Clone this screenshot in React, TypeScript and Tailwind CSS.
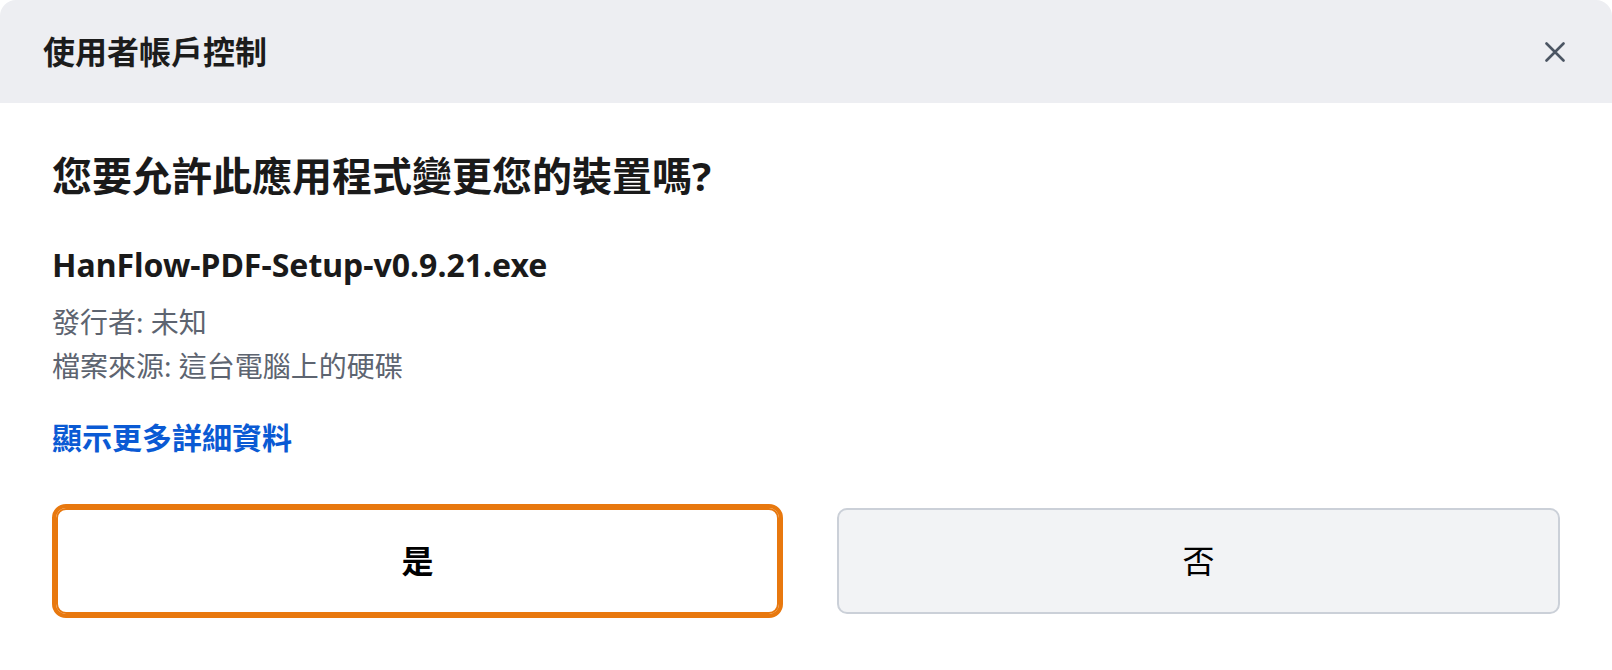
import React from "react";

const font = { fontFamily: '"Noto Sans", "Noto Sans CJK TC", sans-serif' };

export default function App() {
  return (
    <div className="w-[1612px] h-[670px] bg-white" style={font}>
      <div className="w-full h-full rounded-[16px] overflow-hidden bg-white flex flex-col">
        <div className="h-[103px] shrink-0 bg-[#edeef2] flex items-center justify-between pl-[43px] pr-[47px]">
          <div className="text-[32px] leading-[40px] font-bold text-[#1c1c1c]">使用者帳戶控制</div>
          <button className="w-[20px] h-[20px] flex items-center justify-center">
            <svg width="20" height="20" viewBox="0 0 20 20" fill="none">
              <path d="M1.5 1.5 L18.5 18.5 M18.5 1.5 L1.5 18.5" stroke="#4b5563" strokeWidth="2.6" strokeLinecap="round" />
            </svg>
          </button>
        </div>
        <div className="flex flex-col px-[52px] pt-[49px]">
          <div className="text-[40px] leading-[48px] font-bold text-[#1a1a1a]">您要允許此應用程式變更您的裝置嗎?</div>
          <div className="mt-[45px] text-[32px] leading-[40px] font-bold text-[#1a1a1a]">HanFlow-PDF-Setup-v0.9.21.exe</div>
          <div className="mt-[15px] text-[28px] leading-[44px] text-[#5d6470]">
            <div>發行者: 未知</div>
            <div>檔案來源: 這台電腦上的硬碟</div>
          </div>
          <div className="mt-[30px] text-[30px] leading-[40px] font-bold text-[#0a5ad4]">顯示更多詳細資料</div>
          <div className="mt-[50px] pl-[4px] grid grid-cols-2 gap-[58px]">
            <button className="h-[106px] rounded-[10px] border-2 border-[#e8780e] outline-[4px] outline-solid outline-[#e8780e] bg-white text-[32px] font-bold text-black">
              是
            </button>
            <button className="h-[106px] rounded-[10px] border-2 border-[#cbd0d8] bg-[#f2f3f5] text-[32px] text-black">
              否
            </button>
          </div>
        </div>
      </div>
    </div>
  );
}
